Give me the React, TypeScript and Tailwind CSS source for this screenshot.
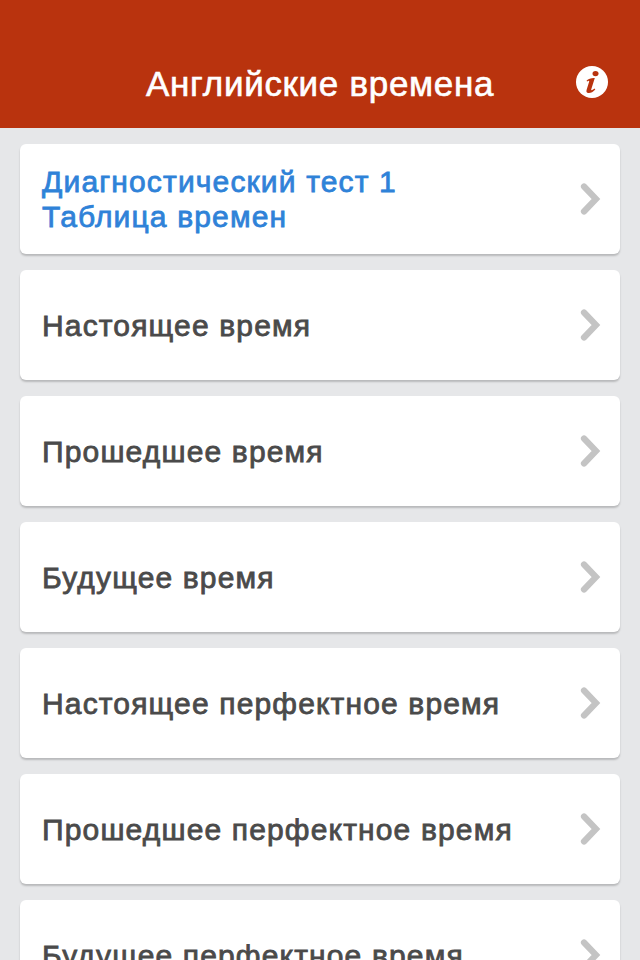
const rows = [
  "Настоящее время",
  "Прошедшее время",
  "Будущее время",
  "Настоящее перфектное время",
  "Прошедшее перфектное время",
  "Будущее перфектное время",
];

function Chevron() {
  return (
    <svg width="24" height="32" viewBox="0 0 24 32" className="shrink-0">
      <path d="M5 3.5 L17 16 L5 28.5" fill="none" stroke="#c4c4c4" strokeWidth="6.2" strokeLinecap="round" strokeLinejoin="miter" />
    </svg>
  );
}

function InfoIcon() {
  return (
    <svg width="32" height="32" viewBox="0 0 32 32">
      <circle cx="16" cy="16" r="16" fill="#fff" />
      <ellipse cx="19.5" cy="7.6" rx="3" ry="2.6" fill="#b9330e" />
      <path d="M10.5 14.8 C12.5 12.6 15.5 11.8 18.8 12 L15.2 23.5 C15 24.6 16 24.6 18.5 22.6 L19.3 23.6 C16.8 26.4 14.2 27.4 12 27 C10.2 26.6 10.2 25 10.7 23.4 L13.2 15.6 C13.3 14.4 12.3 14.6 11.2 15.6 Z" fill="#b9330e" />
    </svg>
  );
}

export default function App() {
  return (
    <div className="h-[960px] w-[640px] overflow-hidden bg-[#e6e7e9] font-['Liberation_Sans',Arial,sans-serif]">
      <header className="flex h-32 items-end justify-between bg-[#b9330e] pb-[22px] pl-[146px] pr-8">
        <h1 className="text-[35px] leading-[44px] font-normal tracking-[0.7px] text-white [-webkit-text-stroke:0.6px_white]">Английские времена</h1>
        <div className="mb-[8px]"><InfoIcon /></div>
      </header>
      <main className="flex flex-col gap-4 px-5 pt-4">
        <a className="flex h-[110px] items-center justify-between rounded-md bg-white pl-[22px] pr-[17px] shadow-[0_2px_2px_rgba(0,0,0,0.2)]">
          <span className="text-[30px] leading-[35px] font-normal tracking-[1.15px] text-[#2f82d8] [-webkit-text-stroke:0.8px_#2f82d8]">
            Диагностический тест 1<br />Таблица времен
          </span>
          <Chevron />
        </a>
        {rows.map((r) => (
          <a key={r} className="flex h-[110px] shrink-0 items-center justify-between rounded-md bg-white pl-[22px] pr-[17px] shadow-[0_2px_2px_rgba(0,0,0,0.2)]">
            <span className="text-[30px] leading-[35px] font-normal tracking-[1.15px] text-[#4a4a4a] [-webkit-text-stroke:0.8px_#4a4a4a]">{r}</span>
            <Chevron />
          </a>
        ))}
      </main>
    </div>
  );
}
